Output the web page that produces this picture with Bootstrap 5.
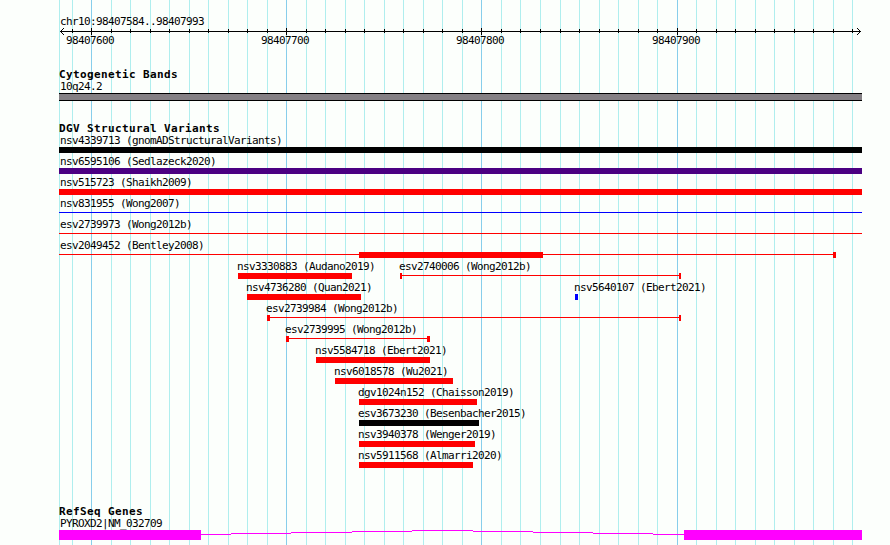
<!DOCTYPE html>
<html lang="en">
<head>
<meta charset="utf-8">
<meta name="viewport" content="width=device-width, initial-scale=1">
<title>chr10:98407584..98407993</title>
<link rel="stylesheet" href="https://cdn.jsdelivr.net/npm/bootstrap@5.3.0/dist/css/bootstrap.min.css">
<style>
body{background:#fcfffc;color:#000;font:11px/17px "DejaVu Sans Mono",monospace;letter-spacing:-.622px}
.browser{width:890px;height:545px;padding:0 28px 0 59px}
.gridlines{z-index:0;shape-rendering:crispEdges}
.tracks{z-index:1}
.ruler{height:66px}
.ruler svg{shape-rendering:crispEdges;overflow:visible}
.ruler text{font-size:11px;fill:#000}
.heading{font-size:11px;font-weight:700;line-height:17px;letter-spacing:.378px;height:12px;margin:0}
.feature{margin-left:var(--gap,0);width:var(--w,803px);flex:none}
.caption-line{height:15px;white-space:nowrap;margin-left:-1px}
.whole .caption-line,.cyto .caption-line,.refseq .caption-line{margin-left:1px}
.glyph{height:6px}
.thin{height:1px;margin-top:2px;flex:1}
.cap2{width:2px}.cap3{width:3px}
.red{background:#f00}.blue{background:#00f}.black{background:#000}.indigo-fill{background:#4b0082}
.band{height:8px;background:#848084;border:solid #000;border-width:1px 0}
.cyto{margin-bottom:19px}
.refseq{margin-top:35px}
.refseq svg{shape-rendering:crispEdges}
</style>
<script src="https://cdn.jsdelivr.net/npm/bootstrap@5.3.0/dist/js/bootstrap.bundle.min.js"></script>
</head>
<body>
<main class="browser position-relative overflow-hidden">
  <svg class="gridlines position-absolute top-0 start-0" width="890" height="545" aria-hidden="true">
    <path stroke="#afeeee" d="M59.5 0v545M72.5 0v545M111.5 0v545M130.5 0v545M150.5 0v545M169.5 0v545M189.5 0v545M208.5 0v545M228.5 0v545M247.5 0v545M267.5 0v545M306.5 0v545M325.5 0v545M345.5 0v545M364.5 0v545M384.5 0v545M403.5 0v545M423.5 0v545M442.5 0v545M462.5 0v545M501.5 0v545M520.5 0v545M540.5 0v545M560.5 0v545M579.5 0v545M599.5 0v545M618.5 0v545M638.5 0v545M657.5 0v545M696.5 0v545M716.5 0v545M735.5 0v545M755.5 0v545M774.5 0v545M794.5 0v545M813.5 0v545M833.5 0v545M852.5 0v545"/>
    <path stroke="#87ceeb" d="M91.5 0v545M286.5 0v545M481.5 0v545M677.5 0v545"/>
  </svg>
  <div class="tracks position-relative">
    <header class="ruler">
      <svg class="d-block" width="803" height="66" viewBox="59 0 803 66">
        <path fill="none" stroke="#000" d="M60 31.5H861M72.5 29v4M111.5 29v4M130.5 29v4M150.5 29v4M169.5 29v4M189.5 29v4M208.5 29v4M228.5 29v4M247.5 29v4M267.5 29v4M306.5 29v4M325.5 29v4M345.5 29v4M364.5 29v4M384.5 29v4M403.5 29v4M423.5 29v4M442.5 29v4M462.5 29v4M501.5 29v4M520.5 29v4M540.5 29v4M560.5 29v4M579.5 29v4M599.5 29v4M618.5 29v4M638.5 29v4M657.5 29v4M696.5 29v4M716.5 29v4M735.5 29v4M755.5 29v4M774.5 29v4M794.5 29v4M813.5 29v4M833.5 29v4M852.5 29v4M91.5 28v7M286.5 28v7M481.5 28v7M677.5 28v7"/>
        <path d="M61 30h1v1h-1zM62 29h1v1h-1zM63 28h1v1h-1zM61 32h1v1h-1zM62 33h1v1h-1zM63 34h1v1h-1zM859 30h1v1h-1zM858 29h1v1h-1zM857 28h1v1h-1zM859 32h1v1h-1zM858 33h1v1h-1zM857 34h1v1h-1z"/>
        <text x="60" y="25">chr10:98407584..98407993</text>
        <text x="66" y="44">98407600</text>
        <text x="261" y="44">98407700</text>
        <text x="456" y="44">98407800</text>
        <text x="652" y="44">98407900</text>
      </svg>
    </header>

    <section class="cyto">
      <h2 class="heading">Cytogenetic Bands</h2>
      <div class="caption-line">10q24.2</div>
      <div class="band"></div>
    </section>

    <section class="variants">
      <h2 class="heading">DGV Structural Variants</h2>
      <div class="whole">
        <div class="feature"><div class="caption-line">nsv4339713 (gnomADStructuralVariants)</div><div class="glyph black"></div></div>
        <div class="feature"><div class="caption-line">nsv6595106 (Sedlazeck2020)</div><div class="glyph indigo-fill"></div></div>
        <div class="feature"><div class="caption-line">nsv515723 (Shaikh2009)</div><div class="glyph red"></div></div>
        <div class="feature"><div class="caption-line">nsv831955 (Wong2007)</div><div class="glyph d-flex"><i class="thin blue"></i></div></div>
        <div class="feature"><div class="caption-line">esv2739973 (Wong2012b)</div><div class="glyph d-flex"><i class="thin red"></i></div></div>
        <div class="feature" style="--w:777px"><div class="caption-line">esv2049452 (Bentley2008)</div><div class="glyph d-flex"><i class="thin red"></i><i class="red" style="width:184px"></i><i class="thin red" style="flex:0 0 290px"></i><i class="cap3 red"></i></div></div>
      </div>
      <div class="d-flex">
        <div class="feature" style="--gap:179px;--w:114px"><div class="caption-line">nsv3330883 (Audano2019)</div><div class="glyph red"></div></div>
        <div class="feature" style="--gap:48px;--w:281px"><div class="caption-line">esv2740006 (Wong2012b)</div><div class="glyph d-flex"><i class="cap2 red"></i><i class="thin red"></i><i class="cap2 red"></i></div></div>
      </div>
      <div class="d-flex">
        <div class="feature" style="--gap:188px;--w:114px"><div class="caption-line">nsv4736280 (Quan2021)</div><div class="glyph red"></div></div>
        <div class="feature" style="--gap:214px;--w:3px"><div class="caption-line">nsv5640107 (Ebert2021)</div><div class="glyph blue"></div></div>
      </div>
      <div class="feature" style="--gap:208px;--w:414px"><div class="caption-line">esv2739984 (Wong2012b)</div><div class="glyph d-flex"><i class="cap3 red"></i><i class="thin red"></i><i class="cap2 red"></i></div></div>
      <div class="feature" style="--gap:227px;--w:144px"><div class="caption-line">esv2739995 (Wong2012b)</div><div class="glyph d-flex"><i class="cap3 red"></i><i class="thin red"></i><i class="cap3 red"></i></div></div>
      <div class="feature" style="--gap:257px;--w:114px"><div class="caption-line">nsv5584718 (Ebert2021)</div><div class="glyph red"></div></div>
      <div class="feature" style="--gap:276px;--w:118px"><div class="caption-line">nsv6018578 (Wu2021)</div><div class="glyph red"></div></div>
      <div class="feature" style="--gap:300px;--w:118px"><div class="caption-line">dgv1024n152 (Chaisson2019)</div><div class="glyph red"></div></div>
      <div class="feature" style="--gap:300px;--w:120px"><div class="caption-line">esv3673230 (Besenbacher2015)</div><div class="glyph black"></div></div>
      <div class="feature" style="--gap:300px;--w:116px"><div class="caption-line">nsv3940378 (Wenger2019)</div><div class="glyph red"></div></div>
      <div class="feature" style="--gap:300px;--w:114px"><div class="caption-line">nsv5911568 (Almarri2020)</div><div class="glyph red"></div></div>
    </section>

    <section class="refseq">
      <h2 class="heading">RefSeq Genes</h2>
      <div class="caption-line">PYROXD2|NM_032709</div>
      <svg class="d-block" width="803" height="10" viewBox="59 530 803 10">
        <path fill="#f0f" d="M59 530h142v10h-142zM684 530h178v10h-178zM201 534h30v1h-30zM231 533h60v1h-60zM291 532h61v1h-61zM352 531h60v1h-60zM412 530h61v1h-61zM473 531h60v1h-60zM533 532h60v1h-60zM593 533h60v1h-60zM653 534h31v1h-31z"/>
      </svg>
    </section>
  </div>
</main>
</body>
</html>
